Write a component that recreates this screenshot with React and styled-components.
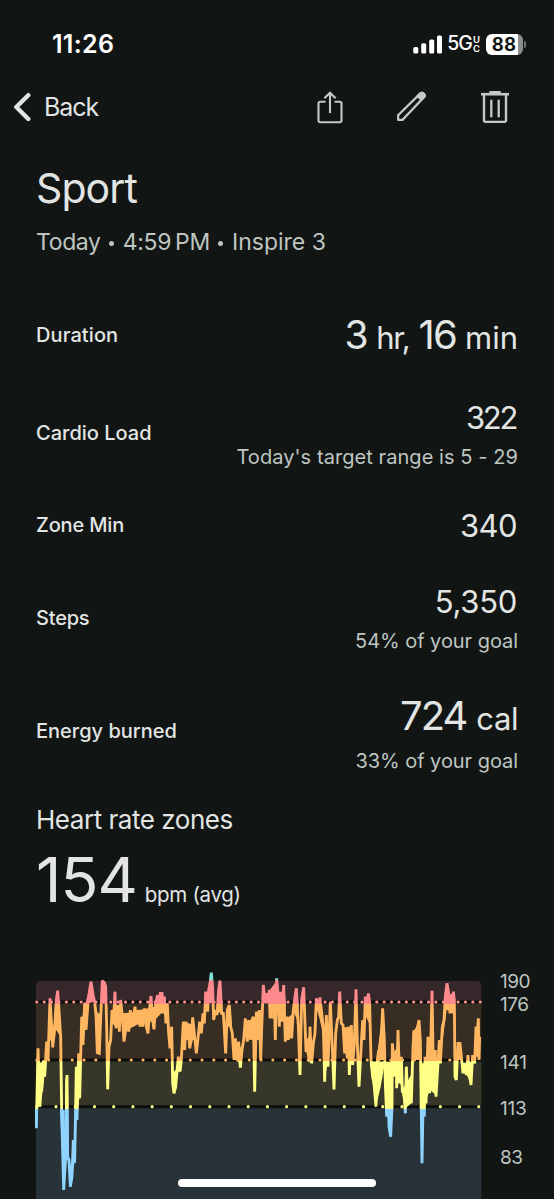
import React from 'react';
import styled, { createGlobalStyle } from 'styled-components';

const GlobalStyle = createGlobalStyle`
  * { box-sizing: border-box; }
  body {
    margin: 0;
    background: #111514;
    color: #e2e5e3;
    font-family: Inter, "Liberation Sans", sans-serif;
    overflow: hidden;
  }
`;

const Screen = styled.main`
  position: relative;
  width: 554px;
  height: 1199px;
  overflow: hidden;
  background: #111514;
`;

const Text = styled.span`
  display: block;
  margin: 0;
  white-space: nowrap;
  font-size: ${(p) => p.$size}px;
  line-height: ${(p) => p.$line || p.$size}px;
  font-weight: ${(p) => p.$weight || 400};
  letter-spacing: ${(p) => p.$track || 0}px;
  margin-right: ${(p) => p.$end || 0}px;
  color: ${(p) => p.$color || '#e2e5e3'};
`;

const StatusBar = styled.div`
  height: 80px;
  padding: 8px 28px 0 52px;
  display: flex;
  align-items: center;
  justify-content: space-between;
`;

const StatusIcons = styled.div`
  display: flex;
  align-items: center;
`;

const Carrier = styled.div`
  display: flex;
  align-items: center;
  margin-left: 4px;
`;

const CarrierSuffix = styled.div`
  display: grid;
  font-size: 9.5px;
  line-height: 9px;
  font-weight: 600;
  color: #fff;
  margin-left: 1px;
`;

const Battery = styled.div`
  width: 37px;
  height: 21px;
  margin-left: 6px;
  padding-right: 1px;
  border-radius: 6px;
  display: flex;
  align-items: center;
  justify-content: center;
  background: linear-gradient(90deg, #fff 32px, #8b8d8c 32px);
  color: #111514;
  font-size: 18.5px;
  font-weight: 700;
  letter-spacing: 0.3px;
`;

const BatteryTip = styled.div`
  width: 2px;
  height: 7px;
  margin-left: 1px;
  border-radius: 0 2px 2px 0;
  background: #707372;
`;

const NavBar = styled.nav`
  height: 54px;
  padding: 0 44px 0 13px;
  display: flex;
  align-items: center;
  justify-content: space-between;
`;

const BackButton = styled.div`
  display: flex;
  align-items: center;
  gap: 12px;
`;

const Actions = styled.div`
  display: flex;
  align-items: center;
  gap: 53px;
  padding-bottom: 1px;
`;

const Header = styled.header`
  height: 156px;
  padding: 27px 36px 0;
`;

const Subtitle = styled.div`
  display: flex;
  align-items: center;
  padding-top: 1px;
`;

const Bullet = styled.span`
  width: 5px;
  height: 5px;
  margin: 2px 9px 0 8px;
  border-radius: 50%;
  background: #bfc5c1;
`;

const Row = styled.section`
  height: ${(p) => p.$height}px;
  padding: 0 36px;
  display: flex;
  align-items: center;
  justify-content: space-between;
`;

const Values = styled.div`
  display: flex;
  flex-direction: column;
  align-items: flex-end;
  margin-top: ${(p) => p.$shift || 0}px;
`;

const Measure = styled.div`
  display: flex;
  align-items: baseline;
  gap: ${(p) => p.$gap || 9}px;
  padding-top: ${(p) => p.$top || 0}px;
`;

const ZonesHeading = styled.div`
  height: 60px;
  padding: 0 36px;
  display: flex;
  align-items: center;
`;

const Average = styled.div`
  height: 110px;
  padding: 0 36px;
  display: flex;
  align-items: baseline;
  gap: 8px;
`;

const ChartArea = styled.section`
  height: 239px;
  padding-left: 35px;
  display: flex;
  gap: 17px;
`;

const Axis = styled.div`
  display: flex;
  flex-direction: column;
  padding-top: 10px;
`;

const Tick = styled(Text)`
  height: ${(p) => p.$height}px;
`;

const HomeIndicator = styled.div`
  position: absolute;
  left: 178px;
  bottom: 12px;
  width: 198px;
  height: 8px;
  border-radius: 4px;
  background: #fff;
`;

const MUTED = '#bfc5c1';

// Each chart unit is one third of a pixel.
const SEGMENTS = [
  [0, '48,445 49,505 54,265 60,440 63,310 65,395 71,300 74,350 80,245 84,300 90,115 95,200 98,262 104,210 107,150 109,120 113,92 117,150 122,230 125,460 131,690 136,610 141,345 143,590 147,600 151,680 156,650 160,540 164,608 169,320 171,480 176,280 179,415 185,170 189,255 194,128 198,210 204,130 208,95 213,65 220,110 224,125 228,165 232,278 238,280 241,200 247,62 253,68 257,80 260,200 263,388 267,260 272,240 276,150 280,190 285,95 288,205 292,180 295,135 298,215 302,120 307,170 312,245 317,210 322,160 326,215 331,150 335,200 341,165 345,140 350,190 355,150 360,200'],
  [360, '2,150 8,200 13,145 18,195 24,220 29,145 33,108 38,180 42,208 47,130 53,105 57,158 61,100 66,100 68,160 73,110 78,190 82,130 86,220 90,265 95,200 98,370 102,400 107,380 111,335 115,290 120,335 124,300 127,240 130,185 134,270 138,185 142,225 145,190 149,265 154,240 158,172 163,220 169,280 174,235 179,185 184,220 189,160 193,190 197,95 203,155 206,90 210,70 214,38 218,85 221,180 226,150 231,165 236,90 240,62 245,160 250,160 253,210 257,280 262,150 268,135 272,200 277,220 282,300 286,235 290,300 296,245 301,323 306,270 311,240 316,175 322,245 327,180 332,240 336,180 340,170 344,395 349,155 353,240 358,150'],
  [720, '2,300 6,180 10,75 15,125 20,100 25,120 28,90 30,175 35,110 38,175 42,80 46,240 50,55 54,100 58,200 61,95 66,185 71,75 76,245 80,170 85,240 90,175 95,235 100,150 105,110 109,85 115,200 120,345 125,120 131,82 135,190 138,275 143,270 148,305 150,200 155,310 160,250 165,220 169,115 175,150 180,112 184,180 190,200 194,365 199,165 204,320 211,125 216,240 222,388 227,220 232,180 236,170 239,95 244,190 249,195 254,280 257,215 262,295 265,200 268,345 274,195 278,315 283,250 288,88 292,250 297,380 303,270 308,180 312,240 316,110 319,160 325,100 329,130'],
  [1050, '3,300 8,350 12,370 18,440 22,300 26,270 31,300 34,230 38,145 43,240 46,370 50,470 54,370 57,500 62,530 66,440 67,250 70,280 73,350 79,270 80,385 84,210 89,370 94,290 97,395 102,400 106,460 109,320 114,435 119,370 124,430 129,260 132,210 137,300 142,205 147,180 151,240 156,610 160,400 163,470 165,290 168,430 174,230 179,400 186,92 190,330 196,270 198,410 204,310 208,240 211,310 217,200 222,180 226,110 231,70 236,100 240,160 243,110 247,160 250,95 253,120 255,350 259,360 264,250 270,250 275,300 279,340 283,310 289,345 294,285 298,340 303,375 308,285 314,310 318,200 321,245 325,175 327,300 329,230'],
];

// Stretches where the samples are dense enough to merge into a solid band.
const DENSE = [
  [0, '48,440 54,268 58,310 78,300 72,360 62,440'],
  [0, '84,230 90,125 97,190 104,200 110,130 118,130 122,230 105,205 97,250'],
  [0, '120,450 134,450 136,600 131,680 127,600'],
  [0, '134,600 136,355 144,355 146,590 158,640 151,680 143,600'],
  [0, '158,640 162,540 166,440 168,330 176,300 183,300 180,400 170,470 165,600'],
  [0, '182,250 186,175 196,130 213,70 224,125 204,130 190,250'],
  [0, '243,130 247,64 258,80 258,130'],
  [0, '224,130 234,160 242,160 240,275 232,278'],
  [0, '276,150 300,145 296,200 280,195'],
  [0, '308,160 360,155 360,190 312,215'],
  [360, '0,150 45,140 83,130 84,180 68,155 45,180 20,190 0,180'],
  [360, '48,128 53,106 70,104 76,128'],
  [360, '97,330 103,335 122,305 112,350 102,400'],
  [360, '127,200 160,190 168,240 150,240 132,240'],
  [360, '195,130 206,90 214,60 219,90 216,130'],
  [360, '230,160 240,70 246,155'],
  [360, '256,200 262,155 272,150 279,240 272,200'],
  [360, '280,250 301,260 306,270 301,318 292,300'],
  [360, '315,180 337,185 335,230 320,235'],
  [720, '6,130 10,78 15,110 28,92 50,62 60,110 72,80 78,130 72,175 54,150 30,170 26,130'],
  [720, '74,180 100,160 94,230 78,230'],
  [720, '98,150 108,90 116,130 112,180'],
  [720, '136,250 150,220 160,250 152,308 142,280'],
  [720, '168,140 186,130 194,200 192,240 180,180'],
  [720, '190,210 200,190 205,300 194,355'],
  [720, '246,200 276,205 276,300 258,285'],
  [720, '306,240 314,130 330,120 332,200 318,170'],
  [720, '330,305 375,305 362,380 347,443'],
  [720, '350,300 363,200 368,150 375,300'],
  [1050, '3,305 15,360 18,440 40,305'],
  [1050, '20,300 38,150 44,300'],
  [1050, '42,305 66,305 66,440 62,525 48,440'],
  [1050, '66,300 95,330 99,390 90,370 80,340 68,320'],
  [1050, '84,215 92,300 76,300'],
  [1050, '95,395 102,380 127,340 124,430 106,445'],
  [1050, '127,220 148,185 152,300 130,300'],
  [1050, '150,310 205,310 198,405 180,390 160,440 152,440'],
  [1050, '172,240 186,230 194,300 172,300'],
  [1050, '213,240 226,115 231,75 237,105 250,100 253,130 244,155 230,150 218,240'],
  [1050, '264,255 276,300 262,300'],
  [1050, '276,310 310,305 303,370 290,345'],
  [1050, '312,290 325,180 330,250 326,290'],
];

const toAbsolute = ([offset, points]) =>
  points
    .split(' ')
    .map((p) => {
      const [x, y] = p.split(',').map(Number);
      return `${x + offset},${y}`;
    })
    .join(' ');

const HEART_RATE = SEGMENTS.map(toAbsolute).join(' ');

const ZONES = [
  { y: 62, h: 64, fill: '#36282a' },
  { y: 126, h: 174, fill: '#372d22' },
  { y: 300, h: 140, fill: '#363728' },
  { y: 440, h: 277, fill: '#273339' },
];

const THRESHOLDS = [
  { y: 126, step: 22.17, color: '#ff8f91' },
  { y: 300, step: 35.4, color: '#ffb661' },
  { y: 440, step: 57.65, color: '#ffff86' },
];

const LINE_STOPS = [
  [0, 60, '#7fe3d4'],
  [60, 131, '#ff8a8e'],
  [131, 304, '#ffb661'],
  [304, 447, '#ffff86'],
  [447, 717, '#8fd3ff'],
];

const ChartSvg = styled.svg`
  flex: none;
`;

function HeartRateChart() {
  return (
    <ChartSvg width="448" height="239" viewBox="45 0 1344 717">
      <defs>
        <clipPath id="panel">
          <rect x="47" y="62" width="1338" height="700" rx="16" />
        </clipPath>
        <linearGradient id="zones" gradientUnits="userSpaceOnUse" x1="0" y1="0" x2="0" y2="717">
          {LINE_STOPS.map(([a, b, c]) => (
            <React.Fragment key={c}>
              <stop offset={a / 717} stopColor={c} />
              <stop offset={b / 717} stopColor={c} />
            </React.Fragment>
          ))}
        </linearGradient>
      </defs>
      <g clipPath="url(#panel)">
        {ZONES.map((z) => (
          <rect key={z.y} x="47" y={z.y} width="1338" height={z.h} fill={z.fill} />
        ))}
        {THRESHOLDS.map((t) => (
          <path key={t.y} d={`M47 ${t.y}H1385`} stroke="#0e0f0c" strokeWidth="9" />
        ))}
      </g>
      {THRESHOLDS.map((t) => (
        <path
          key={t.y}
          d={`M50.5 ${t.y}H1384`}
          stroke={t.color}
          strokeWidth="9.5"
          strokeLinecap="round"
          strokeDasharray={`0 ${t.step}`}
        />
      ))}
      {DENSE.map((band) => (
        <polygon key={band[0] + band[1]} points={toAbsolute(band)} fill="url(#zones)" />
      ))}
      <polyline points={HEART_RATE} fill="none" stroke="url(#zones)" strokeWidth="8.5" strokeLinejoin="miter" strokeMiterlimit="2" />
    </ChartSvg>
  );
}

function SignalIcon() {
  return (
    <svg width="30" height="19" viewBox="0 0 30 19" fill="#fff">
      <rect x="0.3" y="12" width="5" height="6.5" rx="1.5" />
      <rect x="8.2" y="8.3" width="5" height="10.2" rx="1.5" />
      <rect x="16.2" y="4.5" width="5" height="14" rx="1.5" />
      <rect x="24" y="0.4" width="5" height="18.1" rx="1.5" />
    </svg>
  );
}

function BackIcon() {
  return (
    <svg width="19" height="30" viewBox="0 0 19 30" fill="none" stroke="#e2e5e3" strokeWidth="4.4" strokeLinecap="round" strokeLinejoin="round">
      <path d="M15.3 3.2L3.3 15l12 12" />
    </svg>
  );
}

function ShareIcon() {
  return (
    <svg width="26" height="34" viewBox="0 0 26 34" fill="none" stroke="#c6cac7" strokeWidth="2.1">
      <path d="M8.5 11.8H3.2a1.7 1.7 0 0 0-1.7 1.7v17a1.7 1.7 0 0 0 1.7 1.7h19.6a1.7 1.7 0 0 0 1.7-1.7V13.500a1.7 1.7 0 0 0-1.7-1.7h-5.3M13 23V3M7.4 8.3L13 2.7l5.6 5.6" />
    </svg>
  );
}

function EditIcon() {
  return (
    <svg width="31" height="31" viewBox="0 0 32 32" fill="none" stroke="#c6cac7" strokeWidth="2.3" strokeLinejoin="round">
      <path d="M2.2 29.8v-4.7L24.9 2.7c1.2-1.2 2.7-1 3.8.1s1.2 2.500.1 3.700L6.700 29.800z" />
      <path d="M22.300 5.300l2.600-2.600c1.200-1.200 2.700-1 3.800.1s1.200 2.500.1 3.700L26.200 9.100z" fill="#c6cac7" />
    </svg>
  );
}

function TrashIcon() {
  return (
    <svg width="30" height="34" viewBox="0 0 30 34" fill="none" stroke="#c6cac7">
      <path d="M1 4.2H29" strokeWidth="2.6" />
      <path d="M9.3 2.3H20.7" strokeWidth="2.6" />
      <path d="M4 5v25.500a1.400 1.400 0 0 0 1.400 1.400h19.200a1.400 1.400 0 0 0 1.400-1.400V5" strokeWidth="2.4" />
      <path d="M11.300 9.700v17.600M18.700 9.700v17.600" strokeWidth="2.3" />
    </svg>
  );
}

export default function App() {
  return (
    <Screen>
      <GlobalStyle />
      <StatusBar>
        <Text $size={25} $weight={600} $color="#fff" $track={0.3}>11:26</Text>
        <StatusIcons>
          <SignalIcon />
          <Carrier>
            <Text $size={19.5} $weight={500} $color="#fff" $track={-0.9}>5G</Text>
            <CarrierSuffix><span>U</span><span>C</span></CarrierSuffix>
          </Carrier>
          <Battery>88</Battery>
          <BatteryTip />
        </StatusIcons>
      </StatusBar>

      <NavBar>
        <BackButton>
          <BackIcon />
          <Text $size={25} $track={-1.1}>Back</Text>
        </BackButton>
        <Actions>
          <ShareIcon />
          <EditIcon />
          <TrashIcon />
        </Actions>
      </NavBar>

      <Header>
        <Text as="h1" $size={41} $line={54} $track={-0.9}>Sport</Text>
        <Subtitle>
          <Text $size={23} $line={52} $track={-0.35} $color={MUTED}>Today</Text>
          <Bullet />
          <Text $size={23} $line={52} $track={-0.3} $color={MUTED}>4:59{'\u2009'}PM</Text>
          <Bullet />
          <Text $size={23} $line={52} $track={0} $color={MUTED}>Inspire 3</Text>
        </Subtitle>
      </Header>

      <Row $height={90}>
        <Text $size={20} $weight={500} $track={0.1}>Duration</Text>
        <Measure>
          <Text $size={39} $track={-1.5}>3</Text>
          <Text $size={31} $track={-1.2}>hr,</Text>
          <Text $size={40} $track={-1.8}>16</Text>
          <Text $size={31}>min</Text>
        </Measure>
      </Row>
      <Row $height={106}>
        <Text $size={20} $weight={500}>Cardio Load</Text>
        <Values $shift={9}>
          <Text $size={31} $line={38} $track={-2.3} $end={2}>322</Text>
          <Text $size={20} $line={40} $track={0.07} $color={MUTED}>Today's target range is 5 - 29</Text>
        </Values>
      </Row>
      <Row $height={78}>
        <Text $size={20} $weight={500} $track={-0.15}>Zone Min</Text>
        <Text $size={31} $track={-0.6} $end={1}>340</Text>
      </Row>
      <Row $height={108}>
        <Text $size={20} $weight={500} $track={-0.2}>Steps</Text>
        <Values $shift={8}>
          <Text $size={31} $line={38} $track={-0.3} $end={1}>5,350</Text>
          <Text $size={20} $line={40} $track={-0.05} $color={MUTED}>54% of your goal</Text>
        </Values>
      </Row>
      <Row $height={118}>
        <Text $size={20} $weight={500}>Energy burned</Text>
        <Values $shift={11}>
          <Measure $gap={10} $top={4}>
            <Text $size={40} $line={43} $track={-2}>724</Text>
            <Text $size={31} $line={43} $track={-0.4}>cal</Text>
          </Measure>
          <Text $size={20} $line={43} $track={-0.05} $color={MUTED}>33% of your goal</Text>
        </Values>
      </Row>

      <ZonesHeading>
        <Text $size={26} $track={-0.47}>Heart rate zones</Text>
      </ZonesHeading>
      <Average>
        <Text $size={62.5} $line={58} $track={-1}>154</Text>
        <Text $size={20.5} $track={-0.3}>bpm (avg)</Text>
      </Average>

      <ChartArea>
        <HeartRateChart />
        <Axis>
          <Tick $size={19} $line={23} $height={23} $track={-0.5} $color={MUTED}>190</Tick>
          <Tick $size={19} $line={23} $height={58} $track={-0.5} $color={MUTED}>176</Tick>
          <Tick $size={19} $line={23} $height={46} $track={-0.2} $color={MUTED}>141</Tick>
          <Tick $size={19} $line={23} $height={49} $track={-0.2} $color={MUTED}>113</Tick>
          <Tick $size={19} $line={23} $height={22} $track={-0.6} $color={MUTED}>83</Tick>
        </Axis>
      </ChartArea>
      <HomeIndicator />
    </Screen>
  );
}
